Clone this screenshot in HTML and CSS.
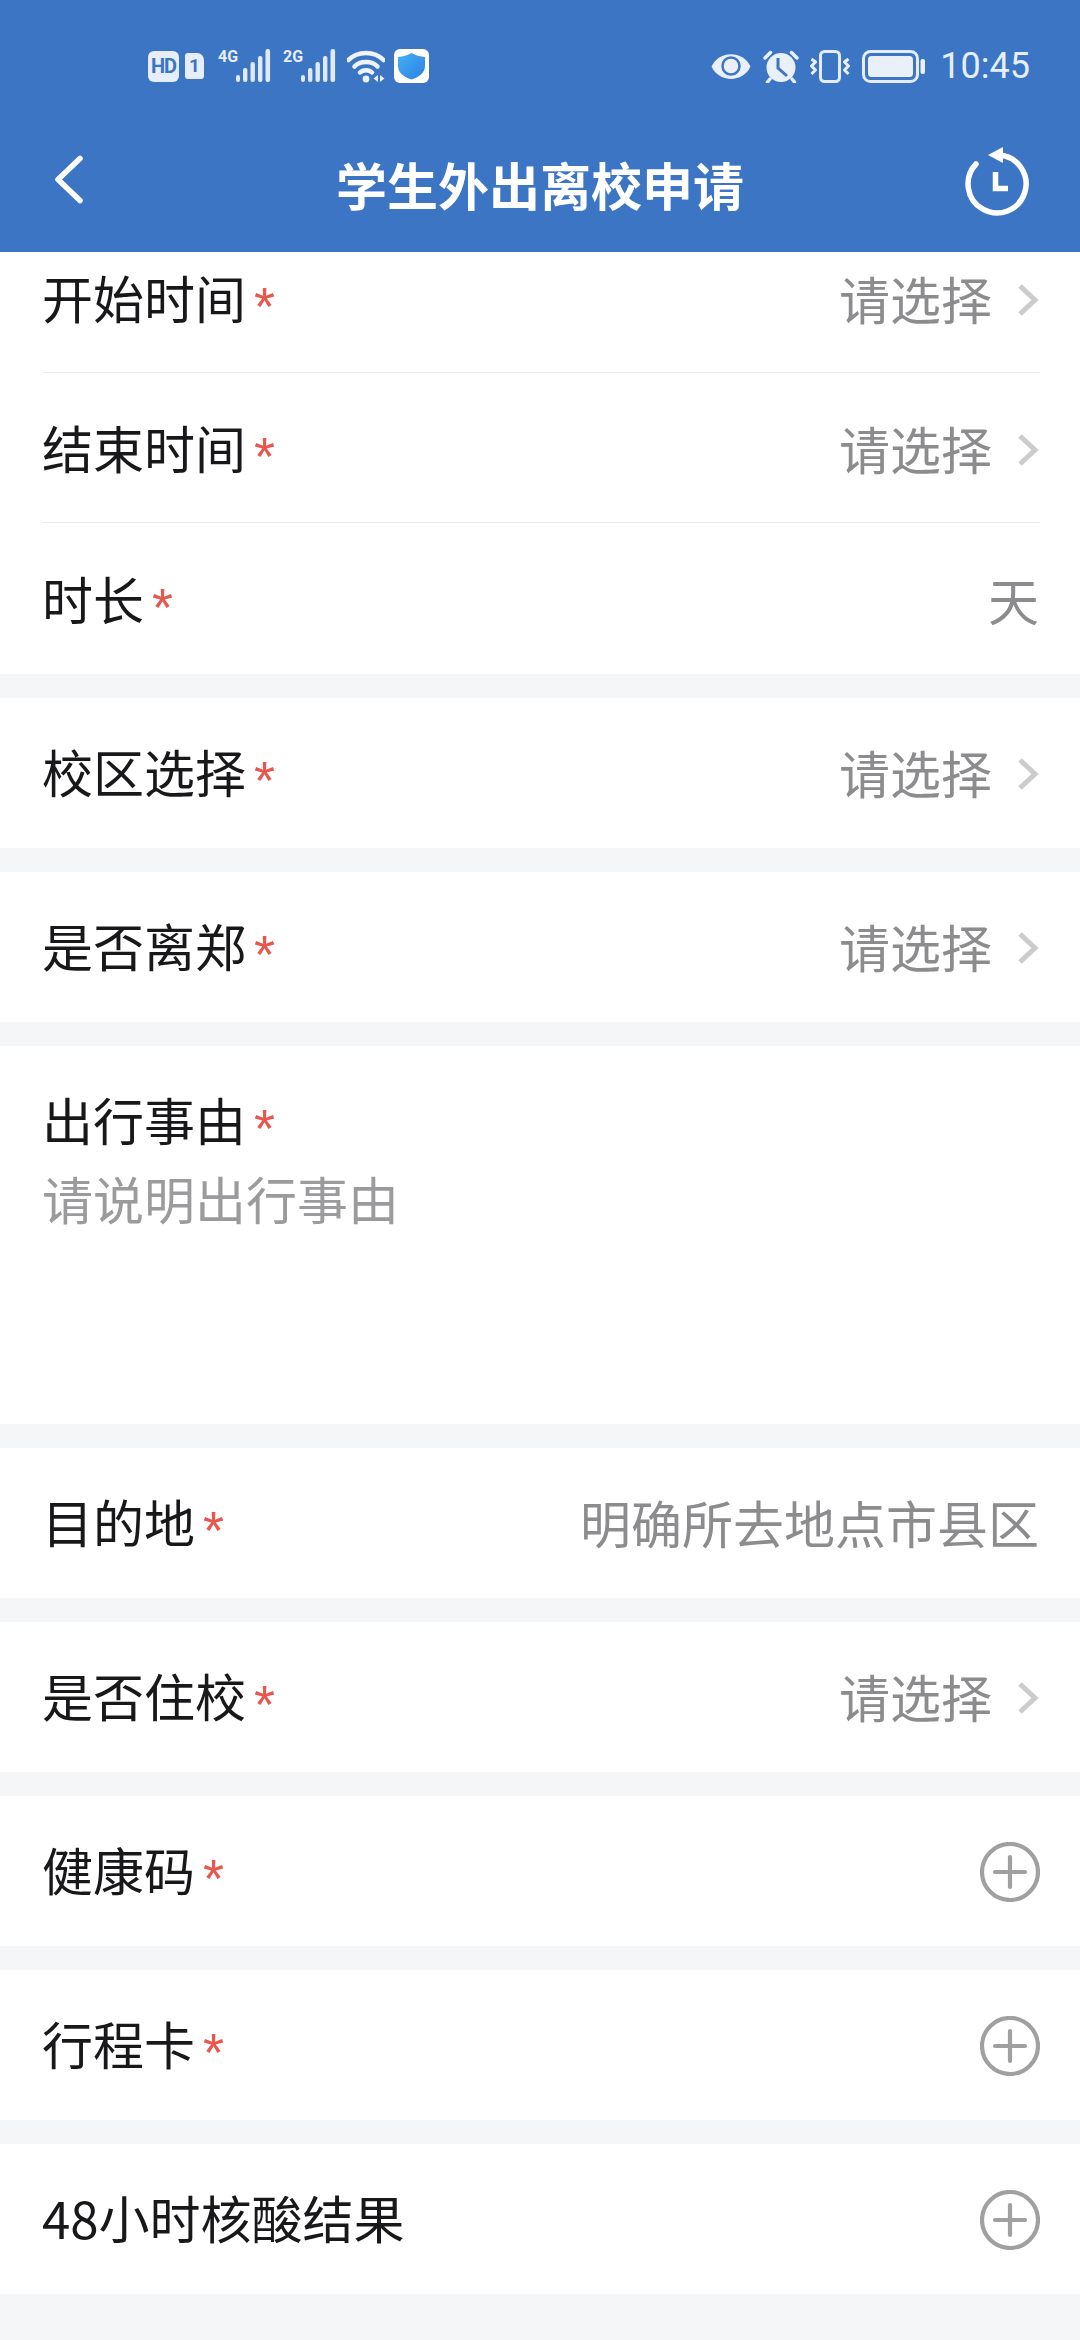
FILE: index.html
```html
<!DOCTYPE html>
<html lang="zh-CN">
<head>
<meta charset="utf-8">
<title>学生外出离校申请</title>
<link rel="stylesheet" href="styles.css">
</head>
<body>
<header class="appbar">
  <div class="status">
    <div class="status-left">
      <span class="hd">HD</span>
      <span class="sim">1</span>
      <svg class="net" width="54" height="44" viewBox="0 -10 54 44"><text class="net-label" x="0" y="12.500">4G</text><g class="net-bars"><rect x="18" y="26" width="4" height="7" rx="2"/><rect x="25" y="19" width="4.400" height="14" rx="2"/><rect x="32.500" y="13" width="4.400" height="20" rx="2"/><rect x="40" y="7" width="4.400" height="26" rx="2"/><rect x="47.500" y="0" width="4.600" height="33" rx="2"/></g></svg>
      <svg class="net net-second" width="54" height="44" viewBox="0 -10 54 44"><text class="net-label" x="0" y="12.500">2G</text><g class="net-bars"><rect x="18" y="26" width="4" height="7" rx="2"/><rect x="25" y="19" width="4.400" height="14" rx="2"/><rect x="32.500" y="13" width="4.400" height="20" rx="2"/><rect x="40" y="7" width="4.400" height="26" rx="2"/><rect x="47.500" y="0" width="4.600" height="33" rx="2"/></g></svg>
      <svg class="wifi" width="38" height="34" viewBox="0 0 38 34"><g class="wifi-arcs"><path d="M1.500 11C10.500 1.500 27.500 1.500 36.500 11"/><path d="M7.500 17.500C13 11.500 25 11.500 30.500 17.500"/><path d="M13 23.500C16 20.500 22 20.500 25 23.500"/></g><circle class="ic-fill" cx="19" cy="30" r="3.400"/><path class="ic-fill" d="M31 26v7l-4.500-3.500zM33 26v7l4.500-3.500z"/></svg>
      <svg class="shield" width="35" height="34" viewBox="0 0 35 34"><defs><linearGradient id="sg" x1="0" y1="0" x2="1" y2="1"><stop offset="0" stop-color="#45b0f2"/><stop offset="1" stop-color="#2c7fe6"/></linearGradient></defs><rect class="shield-bg" width="35" height="34" rx="6"/><path fill="url(#sg)" d="M17.500 4C21.500 6.500 26 7.500 31 8v9c0 6.500-5.500 11-13.500 13.500C9.500 28 4 23.500 4 17V8c5-.5 9.500-1.500 13.500-4z"/></svg>
    </div>
    <div class="status-right">
      <svg class="eye" width="40" height="27" viewBox="0 0 40 27"><path class="ic-fill" d="M0.500 13.500C8 -3 32 -3 39.500 13.500C32 30 8 30 0.500 13.500Z"/><circle class="eye-ring" cx="20" cy="13" r="8.500"/><path class="ic-fill" d="M14 11a6 6 0 1 0 8-4.500a5 5 0 0 1-8 4.500z"/></svg>
      <svg class="alarm" width="36" height="33" viewBox="0 0 36 33"><circle class="ic-fill" cx="18" cy="17.500" r="14.500"/><path class="ic-line" d="M2 8L7.500 2.500M34 8L28.500 2.500M7 29L4.500 32M29 29L31.500 32"/><path class="alarm-hands" d="M15 8v10L24 26"/></svg>
      <svg class="vibrate" width="40" height="33" viewBox="0 0 40 33"><rect class="ic-stroke" x="10.500" y="1.500" width="19" height="30" rx="4"/><path class="ic-zig" d="M1.500 9L5.500 12L1.500 16L5.500 20L1.500 24M38.500 9L34.500 12L38.500 16L34.500 20L38.500 24"/></svg>
      <svg class="battery" width="63" height="33" viewBox="0 0 63 33"><rect class="ic-stroke" x="1.500" y="1.500" width="54" height="30" rx="7"/><rect class="ic-fill" x="6" y="6" width="45" height="21" rx="3.500"/><rect class="ic-fill" x="58.500" y="9" width="4.500" height="15" rx="2"/></svg>
      <span class="clock">10:45</span>
    </div>
  </div>
  <nav class="nav">
    <svg class="nav-back" width="34" height="60" viewBox="0 0 34 60"><path d="M28 4.500L6 25.500L28 46.500"/></svg>
    <h1 class="nav-title">学生外出离校申请</h1>
    <svg class="nav-history" width="70" height="76" viewBox="0 0 70 76"><path class="nh-line" d="M14 18A29 29 0 1 0 37 9"/><path class="nh-arrow" d="M26 9L41 1V17Z"/><path class="nh-l" d="M33.500 26V42.500H46"/></svg>
  </nav>
</header>

<main class="form">
  <section class="card">
    <div class="row row-clipped row-line"><span class="label">开始时间<i class="req">*</i></span><span class="value">请选择<svg class="chev" width="22" height="34" viewBox="0 0 22 34"><path d="M3 3L18 17L3 31"/></svg></span></div>
    <div class="row row-line"><span class="label">结束时间<i class="req">*</i></span><span class="value">请选择<svg class="chev" width="22" height="34" viewBox="0 0 22 34"><path d="M3 3L18 17L3 31"/></svg></span></div>
    <div class="row row-last"><span class="label">时长<i class="req">*</i></span><span class="value">天</span></div>
  </section>
  <section class="card">
    <div class="row"><span class="label">校区选择<i class="req">*</i></span><span class="value">请选择<svg class="chev" width="22" height="34" viewBox="0 0 22 34"><path d="M3 3L18 17L3 31"/></svg></span></div>
  </section>
  <section class="card">
    <div class="row"><span class="label">是否离郑<i class="req">*</i></span><span class="value">请选择<svg class="chev" width="22" height="34" viewBox="0 0 22 34"><path d="M3 3L18 17L3 31"/></svg></span></div>
  </section>
  <section class="card card-area">
    <div class="label">出行事由<i class="req">*</i></div>
    <div class="placeholder">请说明出行事由</div>
  </section>
  <section class="card">
    <div class="row"><span class="label">目的地<i class="req">*</i></span><span class="value">明确所去地点市县区</span></div>
  </section>
  <section class="card">
    <div class="row"><span class="label">是否住校<i class="req">*</i></span><span class="value">请选择<svg class="chev" width="22" height="34" viewBox="0 0 22 34"><path d="M3 3L18 17L3 31"/></svg></span></div>
  </section>
  <section class="card">
    <div class="row"><span class="label">健康码<i class="req">*</i></span><svg class="plus" width="60" height="60" viewBox="0 0 60 60"><circle cx="30" cy="30" r="28"/><path d="M15 30H45M30 15V45"/></svg></div>
  </section>
  <section class="card">
    <div class="row"><span class="label">行程卡<i class="req">*</i></span><svg class="plus" width="60" height="60" viewBox="0 0 60 60"><circle cx="30" cy="30" r="28"/><path d="M15 30H45M30 15V45"/></svg></div>
  </section>
  <section class="card">
    <div class="row"><span class="label">48小时核酸结果</span><svg class="plus" width="60" height="60" viewBox="0 0 60 60"><circle cx="30" cy="30" r="28"/><path d="M15 30H45M30 15V45"/></svg></div>
  </section>
</main>
</body>
</html>
```

FILE: styles.css
```css
* { box-sizing: border-box; }

html, body {
  margin: 0;
  padding: 0;
}

body {
  width: 1080px;
  height: 2340px;
  overflow: hidden;
  background: #f5f6f8;
  font-family: "Noto Sans CJK SC", "Noto Sans", sans-serif;
  color: #18181a;
}

/* App bar */
.appbar {
  height: 252px;
  background: #3b75c4;
  color: #fff;
}

.status {
  height: 132px;
  display: flex;
  align-items: center;
  justify-content: space-between;
  padding: 0 50px 0 148px;
}

.status-left, .status-right {
  display: flex;
  align-items: center;
}

.status-left svg, .status-right svg { display: block; flex: none; }

.hd {
  width: 31px;
  height: 31px;
  border-radius: 6px;
  background: #e6eef9;
  color: #3b75c4;
  font: 700 20px/31px "Roboto", sans-serif;
  text-align: center;
  letter-spacing: -1px;
}

.sim {
  width: 19px;
  height: 26px;
  margin-left: 6px;
  border-radius: 3px 7px 3px 3px;
  background: #e6eef9;
  color: #3b75c4;
  font: 700 19px/26px "Roboto", sans-serif;
  text-align: center;
}

.net { margin-left: 14px; margin-bottom: 10px; }
.net-second { margin-left: 11px; }
.net-label { font: 700 16px "Roboto", sans-serif; fill: #e6eef9; }
.net-bars { fill: #dfe9f8; }

.wifi { margin-left: 10px; }
.wifi-arcs { fill: none; stroke: #eef3fb; stroke-width: 4.500px; stroke-linecap: round; }
.shield { margin-left: 9px; }
.shield-bg { fill: #fff; }

.ic-fill { fill: #e9f0fa; }
.ic-stroke { fill: none; stroke: #e4ecf8; stroke-width: 3px; }
.ic-line { fill: none; stroke: #e9f0fa; stroke-width: 3.500px; stroke-linecap: round; }
.ic-zig { fill: none; stroke: #e9f0fa; stroke-width: 3px; stroke-linejoin: round; }
.eye-ring { fill: none; stroke: #3b75c4; stroke-width: 2.500px; }
.alarm-hands { fill: none; stroke: #3b75c4; stroke-width: 3px; }

.alarm { margin-left: 12px; }
.vibrate { margin-left: 11px; }
.battery { margin-left: 12px; }

.clock {
  margin-left: 15px;
  font: 400 36px/1 "Roboto", sans-serif;
  color: #e6eef9;
}

.nav {
  height: 110px;
  padding: 0 48px 6px;
  display: grid;
  grid-template-columns: 1fr auto 1fr;
  align-items: center;
}

.nav-title {
  margin: 0;
  font-size: 51px;
  font-weight: 700;
  line-height: 70px;
  color: #fff;
}

.nav-back { margin-left: 4px; fill: none; stroke: #fff; stroke-width: 5.500px; stroke-linecap: round; stroke-linejoin: round; }
.nav-history { justify-self: end; }
.nh-line { fill: none; stroke: #fff; stroke-width: 5.500px; stroke-linecap: round; }
.nh-arrow { fill: #fff; }
.nh-l { fill: none; stroke: #fff; stroke-width: 5.500px; }

/* Form */
.form {
  display: flex;
  flex-direction: column;
  gap: 24px;
}

.card { background: #fff; }

.row {
  height: 150px;
  margin-left: 42px;
  margin-right: 40px;
  display: flex;
  align-items: center;
  justify-content: space-between;
  padding-top: 1px;
}

.row-line {
  border-bottom: 1px solid #ededed;
  padding-top: 5px;
}

.row-clipped {
  height: 121px;
  padding-top: 0;
  padding-bottom: 24px;
}

.row-last { height: 151px; padding-top: 5px; }

.label {
  font-size: 51px;
  line-height: 70px;
  color: #18181a;
  display: inline-flex;
  align-items: center;
  padding: 0 0 6px;
}

.req {
  font: 400 54px/54px "Liberation Sans", sans-serif;
  color: #e8574e;
  margin-left: 8px;
  width: 28px;
  font-style: normal;
  height: 36px;
}

.value {
  font-size: 51px;
  line-height: 70px;
  color: #8c8c8e;
  display: inline-flex;
  align-items: center;
  margin-right: 1px;
  padding-bottom: 4px;
}

.chev {
  margin-top: 4px;
  margin-left: 25px;
  fill: none;
  stroke: #cccccc;
  stroke-width: 5px;
}

.plus { fill: none; stroke: #a0a0a0; stroke-width: 4.200px; stroke-linecap: round; display: block; }

.card-area {
  height: 378px;
  padding: 38px 40px 0 42px;
}

.card-area .label { display: flex; padding-bottom: 0; }

.placeholder {
  margin-top: 9px;
  font-size: 51px;
  line-height: 70px;
  color: #9b9b9d;
}
```
